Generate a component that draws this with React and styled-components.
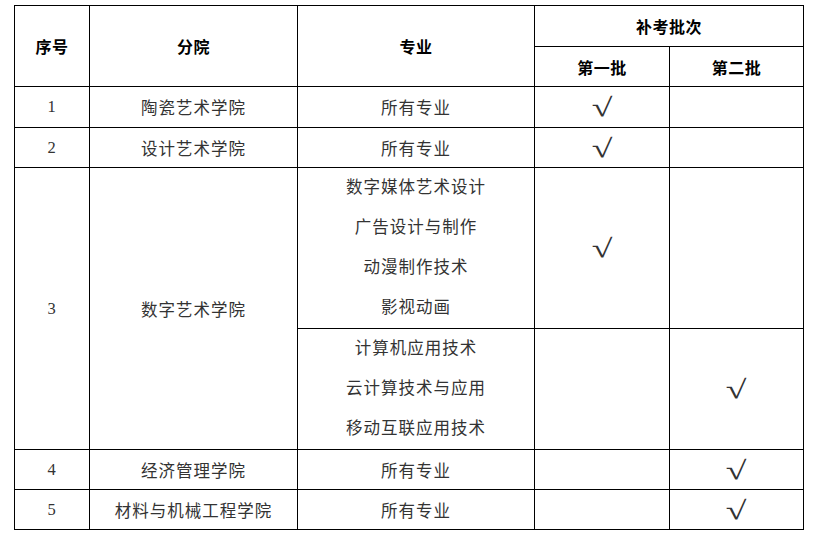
import styled, { createGlobalStyle } from "styled-components";

const GlobalStyle = createGlobalStyle`
    body {
        margin: 0;
        padding: 5px 0 0 14px;
        background: #fff;
        font-family: "Liberation Serif", "Noto Sans CJK SC", serif;
    }
`;

const Table = styled.table`
    border-collapse: collapse;
    table-layout: fixed;
    width: 789px;
    color: #222;

    td,
    th {
        border: 1px solid #000;
        padding: 0;
        text-align: center;
        vertical-align: middle;
    }
`;

const Row = styled.tr`
    height: ${(p) => p.$h || 40}px;
`;

const HeadCell = styled.th`
    font-family: "Noto Sans CJK SC", sans-serif;
    font-weight: 700;
    font-size: 16px;
    letter-spacing: 0.5px;
    color: #000;
`;

const Cell = styled.td`
    font-family: "Liberation Serif", "Noto Sans CJK SC", serif;
    font-size: 16.5px;
    letter-spacing: 1px;
    color: #333;
`;

const Line = styled.div`
    height: 40px;
    line-height: 40px;
`;

const Check = styled.span`
    display: inline-block;
    font-family: "Liberation Serif", serif;
    font-size: 26px;
    line-height: 1;
    letter-spacing: 0;
    color: #333;
    transform: translateY(1px) scaleX(1.45);
`;

const rowsTop = [
    { no: "1", dept: "陶瓷艺术学院", major: "所有专业", first: true, h: 41 },
    { no: "2", dept: "设计艺术学院", major: "所有专业", first: true, h: 40 },
];

const rowsBottom = [
    { no: "4", dept: "经济管理学院", major: "所有专业", second: true, h: 40 },
    { no: "5", dept: "材料与机械工程学院", major: "所有专业", second: true, h: 40 },
];

function SimpleRow({ row }) {
    return (
        <Row $h={row.h}>
            <Cell>{row.no}</Cell>
            <Cell>{row.dept}</Cell>
            <Cell>{row.major}</Cell>
            <Cell>{row.first && <Check>√</Check>}</Cell>
            <Cell>{row.second && <Check>√</Check>}</Cell>
        </Row>
    );
}

export default function App() {
    return (
        <>
            <GlobalStyle />
            <Table>
                <colgroup>
                    <col style={{ width: 75 }} />
                    <col style={{ width: 208 }} />
                    <col style={{ width: 237 }} />
                    <col style={{ width: 135 }} />
                    <col style={{ width: 134 }} />
                </colgroup>
                <thead>
                    <Row $h={41}>
                        <HeadCell rowSpan={2}>序号</HeadCell>
                        <HeadCell rowSpan={2}>分院</HeadCell>
                        <HeadCell rowSpan={2}>专业</HeadCell>
                        <HeadCell colSpan={2}>补考批次</HeadCell>
                    </Row>
                    <Row $h={40}>
                        <HeadCell>第一批</HeadCell>
                        <HeadCell>第二批</HeadCell>
                    </Row>
                </thead>
                <tbody>
                    {rowsTop.map((r) => (
                        <SimpleRow key={r.no} row={r} />
                    ))}
                    <Row $h={160}>
                        <Cell rowSpan={2}>3</Cell>
                        <Cell rowSpan={2}>数字艺术学院</Cell>
                        <Cell>
                            <Line>数字媒体艺术设计</Line>
                            <Line>广告设计与制作</Line>
                            <Line>动漫制作技术</Line>
                            <Line>影视动画</Line>
                        </Cell>
                        <Cell>
                            <Check>√</Check>
                        </Cell>
                        <Cell />
                    </Row>
                    <Row $h={120}>
                        <Cell>
                            <Line>计算机应用技术</Line>
                            <Line>云计算技术与应用</Line>
                            <Line>移动互联应用技术</Line>
                        </Cell>
                        <Cell />
                        <Cell>
                            <Check>√</Check>
                        </Cell>
                    </Row>
                    {rowsBottom.map((r) => (
                        <SimpleRow key={r.no} row={r} />
                    ))}
                </tbody>
            </Table>
        </>
    );
}
